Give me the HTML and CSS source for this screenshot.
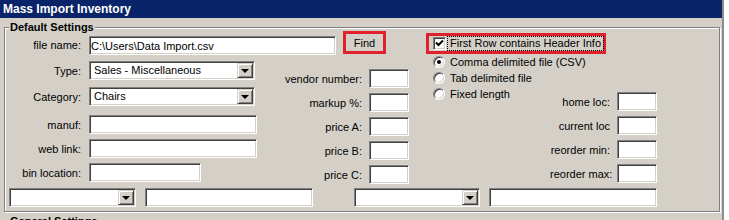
FILE: index.html
```html
<!DOCTYPE html>
<html lang="en">
<head>
    <meta charset="UTF-8">
    <title>Mass Import Inventory</title>
    <link rel="stylesheet" href="styles.css">
</head>
<body>
    <div class="window">
        <div class="titlebar">Mass Import Inventory</div>
        <fieldset class="group">
            <legend>Default Settings</legend>
            <div class="row-file">
                <span class="lbl lbl-left">file name:</span>
                <input class="field w-file" type="text" value="C:\Users\Data Import.csv">
                <button class="btn-find">Find</button>
                <div class="highlight-check">
                    <span class="checkbox">
                        <svg width="11" height="11" viewBox="0 0 11 11"><path d="M2 4.5 L4.5 7 L9 2.5" fill="none" stroke="#000" stroke-width="2"/></svg>
                    </span>
                    <span class="focus-text">First Row contains Header Info</span>
                </div>
            </div>
            <div class="columns">
                <div class="col col-left">
                    <div class="row">
                        <span class="lbl lbl-left">Type:</span>
                        <div class="combo w-combo"><span class="combo-text">Sales - Miscellaneous</span><span class="combo-btn"></span></div>
                    </div>
                    <div class="row more-2">
                        <span class="lbl lbl-left">Category:</span>
                        <div class="combo w-combo"><span class="combo-text">Chairs</span><span class="combo-btn"></span></div>
                    </div>
                    <div class="row more-4">
                        <span class="lbl lbl-left">manuf:</span>
                        <input class="field w-wide" type="text">
                    </div>
                    <div class="row">
                        <span class="lbl lbl-left">web link:</span>
                        <input class="field w-wide" type="text">
                    </div>
                    <div class="row">
                        <span class="lbl lbl-left">bin location:</span>
                        <input class="field w-bin" type="text">
                    </div>
                </div>
                <div class="col col-mid">
                    <div class="row"><span class="lbl">vendor number:</span><input class="field w-small" type="text"></div>
                    <div class="row"><span class="lbl">markup %:</span><input class="field w-small" type="text"></div>
                    <div class="row"><span class="lbl">price A:</span><input class="field w-small" type="text"></div>
                    <div class="row"><span class="lbl">price B:</span><input class="field w-small" type="text"></div>
                    <div class="row"><span class="lbl">price C:</span><input class="field w-small" type="text"></div>
                </div>
                <div class="col-right">
                    <div class="radios">
                        <div class="radio-row"><span class="radio checked"></span>Comma delimited file (CSV)</div>
                        <div class="radio-row"><span class="radio"></span>Tab delimited file</div>
                        <div class="radio-row"><span class="radio"></span>Fixed length</div>
                    </div>
                    <div class="col locs">
                        <div class="row"><span class="lbl">home loc:</span><input class="field w-small" type="text"></div>
                        <div class="row"><span class="lbl">current loc</span><input class="field w-small" type="text"></div>
                        <div class="row"><span class="lbl">reorder min:</span><input class="field w-small" type="text"></div>
                        <div class="row"><span class="lbl">reorder max:</span><input class="field w-small" type="text"></div>
                    </div>
                </div>
            </div>
            <div class="row-bottom">
                <div class="combo w-b1"><span class="combo-text"></span><span class="combo-btn"></span></div>
                <input class="field w-b2" type="text">
                <div class="combo w-b3"><span class="combo-text"></span><span class="combo-btn"></span></div>
                <input class="field w-b4" type="text">
            </div>
        </fieldset>
        <fieldset class="group next">
            <legend>General Settings</legend>
        </fieldset>
    </div>
</body>
</html>
```

FILE: styles.css
```css
* {
    box-sizing: border-box;
}
body {
    margin: 0;
    background: #fff;
    font-family: "Liberation Sans", Arial, sans-serif;
    font-size: 11px;
    color: #000;
    overflow: hidden;
}
.window {
    width: 724px;
    height: 220px;
    background: #d4d0c8;
    border-right: 2px solid #8c8c8c;
    overflow: hidden;
}
.titlebar {
    height: 18px;
    line-height: 18px;
    padding-left: 3px;
    background: #0a246a;
    color: #fff;
    font-size: 12px;
    font-weight: bold;
}
.group {
    width: 716px;
    margin: 3px 0 0 4px;
    padding: 0 4px 4px 4px;
    min-width: 0;
    border: 1px solid #808080;
    box-shadow: inset 1px 1px #fff, 1px 1px #fff;
}
.group legend {
    padding: 0 1px;
    line-height: 13px;
    font-weight: bold;
    background: #d4d0c8;
}
.group.next {
    margin-top: 3px;
    height: 40px;
}

/* controls */
.lbl {
    flex: none;
    text-align: right;
    white-space: nowrap;
    margin-right: 7px;
}
.lbl-left {
    width: 72px;
    margin-right: 8px;
}
.field {
    flex: none;
    height: 19px;
    padding: 0 1px;
    font: inherit;
    color: #000;
    background: #fff;
    border: 1px solid;
    border-color: #808080 #fff #fff #808080;
    box-shadow: inset 1px 1px #404040, inset -1px -1px #d4d0c8;
    outline: none;
}
.combo {
    flex: none;
    display: flex;
    height: 19px;
    padding: 1px;
    background: #fff;
    border: 1px solid;
    border-color: #808080 #fff #fff #808080;
    box-shadow: inset 1px 1px #404040, inset -1px -1px #d4d0c8;
}
.combo-text {
    flex: 1;
    padding-left: 3px;
    line-height: 15px;
    white-space: nowrap;
    overflow: hidden;
}
.combo-btn {
    flex: none;
    width: 16px;
    height: 15px;
    display: flex;
    justify-content: center;
    align-items: center;
    background: #d4d0c8;
    border: 1px solid;
    border-color: #d4d0c8 #404040 #404040 #d4d0c8;
    box-shadow: inset 1px 1px #fff, inset -1px -1px #808080;
}
.combo-btn::after {
    content: "";
    border-left: 4px solid transparent;
    border-right: 4px solid transparent;
    border-top: 4px solid #000;
    margin-top: 1px;
}

/* first row */
.row-file {
    display: flex;
    align-items: flex-start;
}
.row-file .lbl {
    margin-top: 2px;
    line-height: 19px;
}
.w-file {
    width: 247px;
    margin-top: 2px;
}
.btn-find {
    flex: none;
    width: 43px;
    height: 23px;
    margin: -3px 0 0 7px;
    padding: 0;
    font: inherit;
    background: #d4d0c8;
    border: 3px solid #e0202a;
}
.highlight-check {
    flex: none;
    display: flex;
    align-items: center;
    width: 180px;
    height: 21px;
    margin: -1px 0 0 40px;
    padding-left: 4px;
    border: 3px solid #e0202a;
}
.checkbox {
    flex: none;
    width: 13px;
    height: 13px;
    display: flex;
    background: #fff;
    border: 1px solid;
    border-color: #808080 #fff #fff #808080;
    box-shadow: inset 1px 1px #404040, inset -1px -1px #d4d0c8;
}
.checkbox svg {
    display: block;
    margin: 0;
}
.focus-text {
    margin-left: 1px;
    padding: 0 2px;
    line-height: 13px;
    border: 1px dotted #000;
    white-space: nowrap;
}

/* columns */
.columns {
    display: flex;
    align-items: flex-start;
}
.col {
    display: flex;
    flex-direction: column;
    gap: 5px;
}
.row {
    display: flex;
    align-items: center;
    height: 19px;
}
.col-left {
    width: 248px;
    margin-top: 6px;
}
.more-2 {
    margin-top: 2px;
}
.more-4 {
    margin-top: 4px;
}
.w-combo {
    width: 166px;
}
.w-wide {
    width: 168px;
}
.w-bin {
    width: 112px;
}
.w-small {
    width: 40px;
}
.col-mid {
    width: 152px;
    margin-top: 14px;
}
.col-mid .lbl {
    width: 105px;
}
.col-right {
    display: flex;
    margin-left: 24px;
}
.radios {
    width: 117px;
    margin-top: -1px;
}
.radio-row {
    display: flex;
    align-items: center;
    gap: 5px;
    height: 16px;
    white-space: nowrap;
}
.radio {
    flex: none;
    position: relative;
    width: 12px;
    height: 12px;
    border-radius: 50%;
    background: #fff;
    border: 1px solid;
    border-color: #808080 #fff #fff #808080;
    box-shadow: inset 1px 1px #404040, inset -1px -1px #d4d0c8;
}
.radio.checked::after {
    content: "";
    position: absolute;
    left: 3px;
    top: 3px;
    width: 4px;
    height: 4px;
    border-radius: 50%;
    background: #000;
}
.locs {
    margin-top: 37px;
}
.locs .lbl {
    width: 60px;
}

/* bottom row */
.row-bottom {
    display: flex;
    margin-top: 4px;
}
.w-b1 {
    width: 127px;
}
.w-b2 {
    width: 168px;
    margin-left: 9px;
}
.w-b3 {
    width: 126px;
    margin-left: 41px;
}
.w-b4 {
    width: 168px;
    margin-left: 9px;
}
```
